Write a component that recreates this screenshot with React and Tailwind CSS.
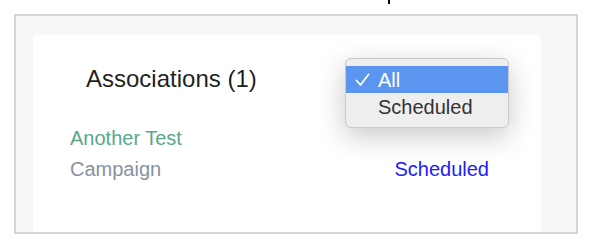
import React, { useState } from "react";

const options = ["All", "Scheduled"];

const associations = [{ name: "Another Test", type: "Campaign", status: "Scheduled" }];

const FilterMenu = ({ selected, onSelect }) => (
  <div className="absolute left-[345px] top-[58px] w-[164px] rounded-[6px] border border-[#c9c9c9] bg-[#eeeeee] py-[7px] shadow-[0_8px_28px_rgba(0,0,0,0.22)]">
    {options.map((option) => (
      <div
        key={option}
        onClick={() => onSelect(option)}
        className={`flex h-[27px] items-center text-[20px] leading-none ${
          option === selected ? "bg-[#5b95ef] text-white" : "text-[#333333]"
        }`}
      >
        <span className="flex w-[32px] justify-center">
          {option === selected ? (
            <svg width="15" height="14" viewBox="0 0 15 14" fill="none">
              <path d="M1.5 7.5 L5.5 12 L13.5 1.5" stroke="white" strokeWidth="1.8" strokeLinecap="round" strokeLinejoin="round" />
            </svg>
          ) : null}
        </span>
        <span>{option}</span>
      </div>
    ))}
  </div>
);

const AssociationRow = ({ item }) => (
  <div className="flex items-end justify-between pl-[37px] pr-[52px]">
    <div className="flex flex-col text-[20px] leading-[31px]">
      <span className="text-[#5aa68c]">{item.name}</span>
      <span className="text-[#8892a3]">{item.type}</span>
    </div>
    <span className="text-[20px] leading-[31px] text-[#1c1cff]">{item.status}</span>
  </div>
);

export default function App() {
  const [filter, setFilter] = useState("All");

  return (
    <div className="relative h-[246px] w-[598px] bg-white font-['Liberation_Sans',Arial,sans-serif]">
      {/* cut-off heading descender above the panel */}
      <div className="absolute left-[388px] top-0 h-[4px] w-[2px] bg-black" />

      <div className="absolute left-0 top-0 pl-[14px] pt-[14px]">
        <div className="h-[220px] w-[564px] border-2 border-[#d6d6d6] bg-[#f7f7f7] pl-[17px] pr-[35px] pt-[19px]">
          <div className="h-full rounded-t-[3px] bg-white pt-[29px]">
            <h2 className="pl-[53px] text-[24px] leading-[29px] text-[#1f1f1f]">
              Associations ({associations.length})
            </h2>
            <div className="mt-[30px]">
              {associations.map((item) => (
                <AssociationRow key={item.name} item={item} />
              ))}
            </div>
          </div>
        </div>
      </div>

      <FilterMenu selected={filter} onSelect={setFilter} />
    </div>
  );
}
